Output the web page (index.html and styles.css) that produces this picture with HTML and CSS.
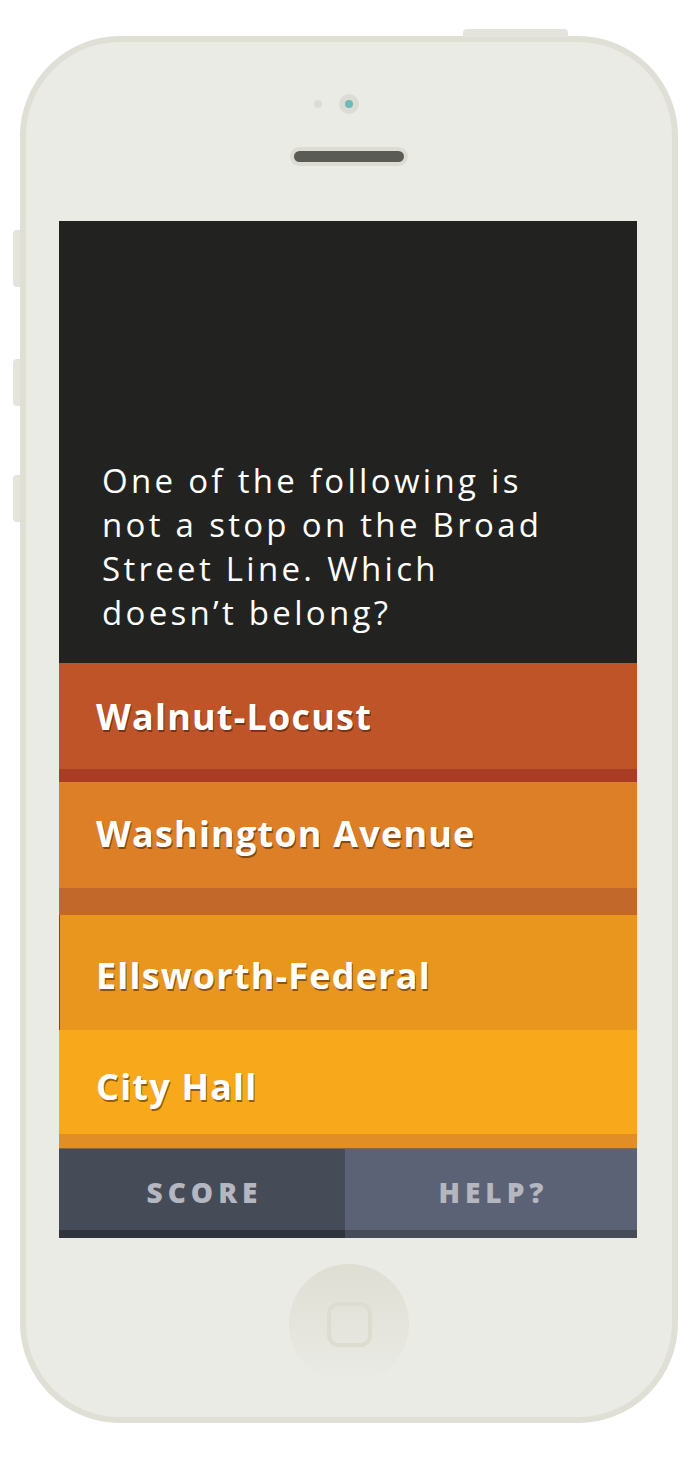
FILE: index.html
```html
<!DOCTYPE html>
<html>
<head>
<meta charset="utf-8">
<link rel="stylesheet" href="styles.css">
</head>
<body>
<div class="stage">
  <div class="phone">
    <div class="top-button"></div>
    <div class="side-button side-1"></div>
    <div class="side-button side-2"></div>
    <div class="side-button side-3"></div>
    <div class="sensors">
      <span class="sensor"></span>
      <span class="camera"><span class="lens"></span></span>
    </div>
    <div class="speaker"><span class="grille"></span></div>
    <div class="screen">
      <div class="question">
        <p>One of the following is not a stop on the Broad Street Line. Which doesn’t belong?</p>
      </div>
      <div class="answer a1">Walnut-Locust</div>
      <div class="answer a2">Washington Avenue</div>
      <div class="answer a3">Ellsworth-Federal</div>
      <div class="answer a4">City Hall</div>
      <div class="tabs">
        <div class="tab tab-score">SCORE</div>
        <div class="tab tab-help">HELP?</div>
      </div>
    </div>
    <div class="home"><span class="home-square"></span></div>
  </div>
</div>
</body>
</html>
```
FILE: styles.css
```css
html, body {
  margin: 0;
  padding: 0;
  background: #ffffff;
}

.stage {
  width: 690px;
  height: 1462px;
  padding: 36px 0 0 20px;
  box-sizing: border-box;
}

.phone {
  position: relative;
  width: 658px;
  height: 1387px;
  box-sizing: border-box;
  border: 6px solid #dfdfd5;
  border-radius: 100px;
  background: #ebebe6;
  display: flex;
  flex-direction: column;
  align-items: center;
}

.top-button {
  position: absolute;
  left: 437px;
  top: -13px;
  width: 105px;
  height: 8px;
  background: #e4e4dc;
  border-radius: 4px 4px 0 0;
}

.side-button {
  position: absolute;
  left: -13px;
  width: 7px;
  background: #e4e4dc;
  border-radius: 4px 0 0 4px;
}
.side-1 { top: 188px; height: 57px; }
.side-2 { top: 317px; height: 47px; }
.side-3 { top: 433px; height: 47px; }

.sensors {
  margin-top: 52px;
  height: 20px;
  display: flex;
  align-items: center;
  gap: 17px;
  margin-left: -26px;
}

.sensor {
  width: 8px;
  height: 8px;
  border-radius: 50%;
  background: #dcdcd5;
}

.camera {
  width: 20px;
  height: 20px;
  border-radius: 50%;
  background: #dcdcd5;
  display: flex;
  align-items: center;
  justify-content: center;
}

.lens {
  width: 8px;
  height: 8px;
  border-radius: 50%;
  background: #6dbab6;
}

.speaker {
  margin-top: 33px;
  width: 118px;
  height: 19px;
  border-radius: 10px;
  background: #dcdcd4;
  display: flex;
  align-items: center;
  justify-content: center;
}

.grille {
  width: 110px;
  height: 11px;
  border-radius: 6px;
  background: #5b5b56;
}

.screen {
  margin-top: 55px;
  width: 578px;
  margin-left: -2px;
  display: flex;
  flex-direction: column;
  font-family: "Open Sans", "Liberation Sans", sans-serif;
}

.question {
  height: 442px;
  box-sizing: border-box;
  background: #222220;
  display: flex;
  flex-direction: column;
  justify-content: flex-end;
  padding: 0 68px 28px 43px;
}

.question p {
  margin: 0;
  color: #ffffff;
  font-size: 33px;
  line-height: 44px;
  letter-spacing: 3.3px;
  font-weight: 500;
}

.answer {
  display: flex;
  align-items: center;
  box-sizing: border-box;
  padding-left: 37px;
  color: #ffffff;
  font-size: 36px;
  font-weight: 700;
  letter-spacing: 1.2px;
  text-shadow: 1px 2px 0 rgba(60, 25, 5, 0.55);
}

.a1 {
  height: 119px;
  background: #bf5428;
  border-bottom: 13px solid #a83c25;
}

.a2 {
  height: 133px;
  background: #dc7f27;
  border-bottom: 27px solid #c2682a;
  padding-bottom: 4px;
}

.a3 {
  height: 115px;
  background: #e9961f;
  border-left: 1px solid #7a4a1a;
  padding-left: 36px;
  padding-top: 6px;
}

.a4 {
  height: 118px;
  background: #f7a91b;
  border-bottom: 14px solid #e08e25;
  padding-top: 8px;
}

.tabs {
  display: flex;
  height: 90px;
}

.tab {
  display: flex;
  align-items: center;
  justify-content: center;
  box-sizing: border-box;
  padding-top: 4px;
  padding-left: 5px;
  font-size: 28px;
  font-weight: 800;
  letter-spacing: 5px;
  color: #b5b7c0;
  border-top: 1px solid #7d6a4a;
}

.tab-score {
  width: 286px;
  background: #464b58;
  border-bottom: 8px solid #31343d;
}

.tab-help {
  flex: 1;
  background: #5c6275;
  border-bottom: 8px solid #474b59;
}

.home {
  margin-top: 26px;
  width: 120px;
  height: 120px;
  border-radius: 50%;
  background: linear-gradient(to bottom, #deded3, #ebebe6);
  display: flex;
  align-items: center;
  justify-content: center;
}

.home-square {
  width: 37px;
  height: 37px;
  border: 4px solid #dcdcd0;
  border-radius: 12px;
}
```
